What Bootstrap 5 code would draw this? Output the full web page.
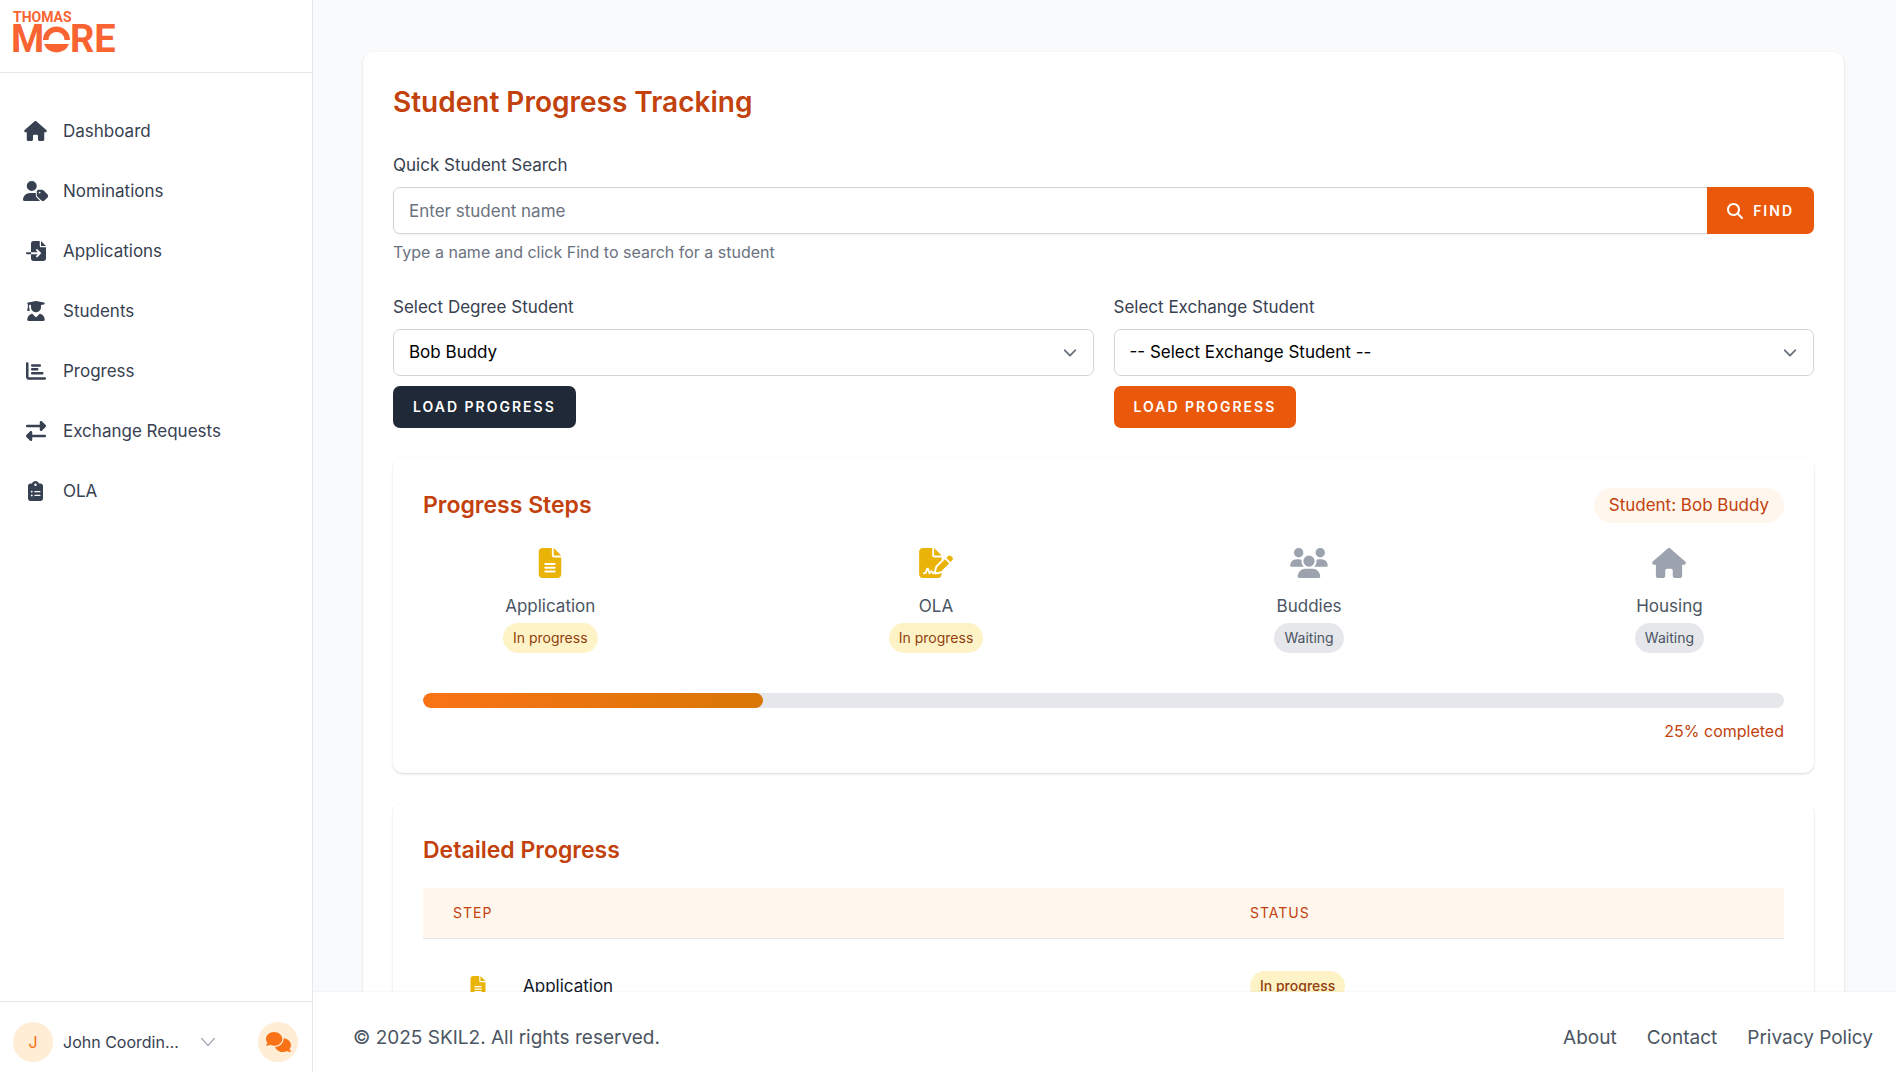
<!DOCTYPE html>
<html lang="en">
<head>
<meta charset="utf-8">
<meta name="viewport" content="width=device-width, initial-scale=1">
<title>Student Progress Tracking</title>
<link href="https://cdn.jsdelivr.net/npm/bootstrap@5.3.0/dist/css/bootstrap.min.css" rel="stylesheet">
<style>
  body { font-family: Inter, "Liberation Sans", sans-serif; font-size: 16px; line-height: 24px; color: #374151; background: #f9fafb; }
  .fa-ico { display: block; fill: currentColor; height: 20px; }
  .side-panel { width: 313px; border-right: 1px solid #e5e7eb; }
  .side-head { height: 73px; border-bottom: 1px solid #e5e7eb; }
  .side-nav { padding: 33px 20px; gap: 10px; }
  .side-nav .nav-link { color: #374151; height: 50px; padding: 0; gap: 12px; font-size: 17px; }
  .side-nav .fa-slot { width: 31px; }
  .side-foot { height: 71px; border-top: 1px solid #e5e7eb; padding: 10px 14px 0 13px; }
  .round-chip { width: 40px; height: 40px; background: #ffedd5; color: #f97316; border: 0; padding: 0; }
  .user-toggle { border: 0; background: none; padding: 0; color: #374151; gap: 10px; }
  .user-name { width: 122px; }
  .page-scroll { padding: 52px 52px 0 50px; scrollbar-width: none; }
  .panel { background: #fff; border-radius: 10px; padding: 30px; box-shadow: 0 1px 3px rgba(0,0,0,.1), 0 1px 2px rgba(0,0,0,.06); }
  .page-title { font-size: 28px; line-height: 40px; font-weight: 600; color: #c2410c; margin-bottom: 30px; }
  .panel-title { font-size: 23px; line-height: 35px; font-weight: 600; color: #c2410c; margin: 0; }
  .form-label { display: block; font-size: 17px; line-height: 26px; margin-bottom: 9px; }
  .form-control, .form-select { height: 47px; font-size: 17px; border-color: #d1d5db; border-radius: 7px; padding-left: 15px; color: #000; }
  .form-control { box-shadow: 0 1px 2px rgba(0,0,0,.05); }
  .form-control::placeholder { color: #6b7280; }
  .form-select { background-image: url("data:image/svg+xml,%3csvg xmlns='http://www.w3.org/2000/svg' fill='none' viewBox='0 0 20 20'%3e%3cpath stroke='%236b7280' stroke-linecap='round' stroke-linejoin='round' stroke-width='1.5' d='M6 8l4 4 4-4'/%3e%3c/svg%3e"); background-size: 26px 26px; background-position: right 10px center; }
  .help-line { color: #6b7280; line-height: 26px; margin-top: 5px; margin-bottom: 29px; }
  .btn-caps { font-size: 14px; line-height: 20px; font-weight: 600; letter-spacing: 2px; text-transform: uppercase; color: #fff; border: 0; border-radius: 7px; padding: 11px 20px; }
  .btn-caps .fa-ico { height: 16px; }
  .btn-ember, .btn-ember:hover { background: #ea580c; color: #fff; }
  .btn-ink, .btn-ink:hover { background: #1f2937; color: #fff; }
  .find-btn { gap: 10px; }
  .load-btn { margin-top: 10px; margin-bottom: 30px; }
  .steps-panel { margin-bottom: 30px; }
  .pill { display: inline-block; border-radius: 20px; font-size: 14px; line-height: 20px; padding: 5px 10px; }
  .pill-amber { background: #fef3c7; color: #92400e; }
  .pill-gray { background: #e5e7eb; color: #4b5563; }
  .pill-student { background: #fff7ed; color: #c2410c; font-size: 17px; line-height: 25px; padding: 5px 15px; }
  .step-row { padding: 0 80px; margin-top: 25px; margin-bottom: 40px; }
  .step-row .fa-ico { height: 30px; }
  .step-name { color: #4b5563; font-size: 17px; line-height: 25px; margin-top: 16px; margin-bottom: 4px; }
  .tone-amber { color: #eab308; }
  .tone-gray { color: #9ca3af; }
  .progress { height: 15px; border-radius: 8px; background: #e5e7eb; }
  .progress-bar { border-radius: 8px; background: linear-gradient(90deg, #f97316, #d97706); }
  .done-line { color: #c2410c; line-height: 24px; margin-top: 11px; }
  .step-table { table-layout: fixed; margin: 20px 0 0; }
  .step-table th { background: #fff7ed; color: #c2410c; font-size: 14px; line-height: 20px; font-weight: 400; letter-spacing: 1px; text-transform: uppercase; padding: 15px 30px; border-bottom: 1px solid #e5e7eb; }
  .step-table td { padding: 32px 30px; color: #111827; font-size: 17px; border-bottom: 1px solid #e5e7eb; }
  .step-table .step-cell { gap: 20px; height: 28px; }
  .step-table .fa-slot { width: 50px; }
  .step-table .pill { font-weight: 500; }
  .step-col { width: 797px; }
  .page-foot { height: 80px; padding: 12px 23px 0 40px; background: #fff; font-size: 19px; color: #4b5563; box-shadow: 0 -1px 2px rgba(0,0,0,.04); z-index: 1; }
  .page-foot a { color: #4b5563; text-decoration: none; }
  .foot-links { gap: 30px; }
</style>
</head>
<body class="vh-100 overflow-hidden d-flex">

<svg width="0" height="0" class="position-absolute" aria-hidden="true">
  <symbol id="i-house" viewBox="0 0 576 512"><path d="M575.8 255.5c0 18-15 32.1-32 32.1h-32l.7 160.2c0 2.7-.2 5.4-.5 8.1V472c0 22.1-17.9 40-40 40H456c-1.1 0-2.2 0-3.3-.1c-1.4 .1-2.8 .1-4.2 .1H416 392c-22.1 0-40-17.9-40-40V448 384c0-17.7-14.3-32-32-32H256c-17.7 0-32 14.3-32 32v64 24c0 22.1-17.9 40-40 40H160 128.1c-1.5 0-3-.1-4.5-.2c-1.2 .1-2.4 .2-3.6 .2H104c-22.1 0-40-17.9-40-40V360c0-.9 0-1.9 .1-2.8V287.6H32c-18 0-32-14-32-32.1c0-9 3-17 10-24L266.4 8c7-7 15-8 22-8s15 2 21 7L564.8 231.5c8 7 12 15 11 24z"/></symbol>
  <symbol id="i-user-tag" viewBox="0 0 640 512"><path d="M224 256A128 128 0 1 0 224 0a128 128 0 1 0 0 256zm-45.700 48C79.800 304 0 383.800 0 482.300C0 498.700 13.300 512 29.700 512H418c8 0 13-2 17-4l-78-78c-18-18-28-42-28-67V304H178.300z"/><path fill-rule="evenodd" d="M400 224h84c17 0 33 7 45 19l94 94c25 25 25 65 0 90l-68 68c-25 25-65 25-90 0l-94-94c-12-12-19-28-19-45v-84c0-26 22-48 48-48zm24 96a24 24 0 1 0 0-48 24 24 0 1 0 0 48z"/></symbol>
  <symbol id="i-file-import" viewBox="0 0 512 512"><path d="M128 64c0-35.3 28.7-64 64-64H352V128c0 17.7 14.3 32 32 32H512V448c0 35.3-28.7 64-64 64H192c-35.3 0-64-28.7-64-64V336H302.1l-39 39c-9.4 9.4-9.4 24.6 0 33.9s24.6 9.4 33.9 0l80-80c9.4-9.4 9.4-24.6 0-33.9l-80-80c-9.4-9.4-24.600-9.400-33.900 0s-9.400 24.600 0 33.900l39 39H128V64zm0 224v48H24c-13.300 0-24-10.700-24-24s10.700-24 24-24H128zM512 128H384V0L512 128z"/></symbol>
  <symbol id="i-graduate" viewBox="0 0 448 512"><path d="M219.3 .5c3.1-.6 6.3-.6 9.4 0l200 40C439.9 42.7 448 52.6 448 64s-8.1 21.3-19.3 23.500L352 102.900V160c0 70.700-57.300 128-128 128s-128-57.300-128-128V102.900L48 93.300v65.100l15.700 78.400c.9 4.700-.3 9.600-3.300 13.300s-7.600 5.900-12.400 5.900H16c-4.800 0-9.300-2.100-12.400-5.900s-4.300-8.600-3.300-13.300L16 158.400V86.600C6.500 83.300 0 74.300 0 64C0 52.600 8.100 42.700 19.300 40.500l200-40zM111.900 327.700c10.500-3.400 21.800 .4 29.400 8.500l71 75.500c6.300 6.700 17 6.700 23.300 0l71-75.500c7.600-8.100 18.900-11.900 29.400-8.500C401 348.600 448 409.400 448 481.300c0 17-13.800 30.700-30.700 30.700H30.700C13.800 512 0 498.200 0 481.300c0-71.900 47-132.700 111.900-153.600z"/></symbol>
  <symbol id="i-chart" viewBox="0 0 512 512"><path d="M32 32c17.700 0 32 14.300 32 32V400c0 8.800 7.200 16 16 16H480c17.700 0 32 14.300 32 32s-14.300 32-32 32H80c-44.200 0-80-35.800-80-80V64C0 46.300 14.300 32 32 32zm96 80c0-17.700 14.300-32 32-32l192 0c17.700 0 32 14.300 32 32s-14.300 32-32 32l-192 0c-17.700 0-32-14.300-32-32zm32 64H288c17.700 0 32 14.300 32 32s-14.300 32-32 32H160c-17.700 0-32-14.300-32-32s14.300-32 32-32zm0 104H416c17.700 0 32 14.300 32 32s-14.300 32-32 32H160c-17.700 0-32-14.300-32-32s14.300-32 32-32z"/></symbol>
  <symbol id="i-swap" viewBox="0 0 512 512"><path d="M32 96l320 0V32c0-12.900 7.800-24.600 19.800-29.600s25.700-2.200 34.900 6.900l96 96c6 6 9.400 14.100 9.400 22.600s-3.400 16.600-9.400 22.600l-96 96c-9.200 9.200-22.900 11.900-34.900 6.900s-19.800-16.600-19.800-29.600V160L32 160c-17.700 0-32-14.300-32-32s14.300-32 32-32zM480 352c17.700 0 32 14.300 32 32s-14.300 32-32 32H160v64c0 12.900-7.800 24.600-19.800 29.600s-25.700 2.200-34.900-6.900l-96-96c-6-6-9.400-14.100-9.400-22.600s3.400-16.600 9.400-22.600l96-96c9.200-9.200 22.900-11.900 34.900-6.900s19.800 16.600 19.800 29.600l0 64H480z"/></symbol>
  <symbol id="i-clipboard" viewBox="0 0 384 512"><path fill-rule="evenodd" d="M192 0c-41.800 0-77.400 26.700-90.500 64H64C28.700 64 0 92.700 0 128V448c0 35.300 28.700 64 64 64H320c35.300 0 64-28.700 64-64V128c0-35.300-28.700-64-64-64H282.500C269.400 26.700 233.800 0 192 0zm0 64a32 32 0 1 1 0 64 32 32 0 1 1 0-64zM72 272a24 24 0 1 1 48 0 24 24 0 1 1 -48 0zm104-16H304c8.800 0 16 7.200 16 16s-7.200 16-16 16H176c-8.800 0-16-7.200-16-16s7.200-16 16-16zM72 368a24 24 0 1 1 48 0 24 24 0 1 1 -48 0zm88 0c0-8.800 7.200-16 16-16H304c8.800 0 16 7.200 16 16s-7.200 16-16 16H176c-8.800 0-16-7.200-16-16z"/></symbol>
  <symbol id="i-file" viewBox="0 0 384 512"><path fill-rule="evenodd" d="M64 0C28.700 0 0 28.700 0 64V448c0 35.300 28.700 64 64 64H320c35.300 0 64-28.700 64-64V160H256c-17.700 0-32-14.300-32-32V0H64zM256 0V128H384L256 0zM112 256H272c8.800 0 16 7.200 16 16s-7.200 16-16 16H112c-8.800 0-16-7.200-16-16s7.200-16 16-16zm0 64H272c8.800 0 16 7.200 16 16s-7.200 16-16 16H112c-8.800 0-16-7.200-16-16s7.200-16 16-16zm0 64H272c8.800 0 16 7.200 16 16s-7.200 16-16 16H112c-8.800 0-16-7.200-16-16s7.200-16 16-16z"/></symbol>
  <symbol id="i-sign" viewBox="0 0 576 512"><path d="M64 0C28.700 0 0 28.700 0 64V448c0 35.300 28.700 64 64 64H320c35.300 0 64-28.700 64-64V428.700c-2.700 1.100-5.400 2-8.200 2.700l-60.100 15c-3 .7-6 1.200-9 1.400c-.9 .1-1.800 .2-2.700 .2H240c-6.100 0-11.600-3.400-14.300-8.800l-8.800-17.700c-1.700-3.400-5.100-5.500-8.800-5.500s-7.200 2.100-8.800 5.500l-8.800 17.700c-2.900 5.900-9.200 9.400-15.700 8.800s-12.100-5.100-13.900-11.300L144 381l-9.800 32.800c-6.100 20.300-24.800 34.200-46 34.200H80c-8.800 0-16-7.200-16-16s7.200-16 16-16h8.200c7.100 0 13.300-4.600 15.300-11.400l14.900-49.500c3.400-11.300 13.800-19.100 25.600-19.100s22.200 7.700 25.600 19.100l11.600 38.600c7.400-6.200 16.800-9.700 26.800-9.700c15.900 0 30.400 9 37.500 23.200l4.400 8.800h8.900c-3.100-8.800-3.700-18.400-1.400-27.800l15-60.100c2.800-11.300 8.600-21.500 16.800-29.700L384 203.600V160H256c-17.700 0-32-14.300-32-32V0H64zM256 0V128H384L256 0zM549.800 139.700c-15.600-15.600-40.900-15.600-56.600 0l-29.400 29.400 71 71 29.400-29.400c15.600-15.600 15.600-40.900 0-56.600l-14.400-14.400zM311.900 321c-4.100 4.100-7 9.200-8.400 14.900l-15 60.100c-1.400 5.500 .2 11.200 4.200 15.200s9.700 5.600 15.200 4.200l60.100-15c5.600-1.400 10.800-4.300 14.900-8.400L512.100 262.700l-71-71L311.900 321z"/></symbol>
  <symbol id="i-users" viewBox="0 0 640 512"><path d="M144 0a80 80 0 1 1 0 160A80 80 0 1 1 144 0zM512 0a80 80 0 1 1 0 160A80 80 0 1 1 512 0zM0 298.700C0 239.800 47.800 192 106.700 192h42.700c15.900 0 31 3.500 44.600 9.700c-1.300 7.200-1.900 14.700-1.900 22.300c0 38.200 16.800 72.500 43.300 96c-.2 0-.4 0-.7 0H21.300C9.600 320 0 310.400 0 298.700zM405.300 320c-.2 0-.4 0-.7 0c26.600-23.500 43.300-57.800 43.300-96c0-7.600-.7-15-1.900-22.300c13.600-6.300 28.700-9.700 44.600-9.700h42.700C592.200 192 640 239.800 640 298.700c0 11.800-9.600 21.300-21.300 21.300H405.300zM224 224a96 96 0 1 1 192 0 96 96 0 1 1 -192 0zM128 485.300C128 411.700 187.700 352 261.300 352H378.700C452.300 352 512 411.700 512 485.300c0 14.700-11.900 26.700-26.700 26.700H154.700c-14.700 0-26.700-11.900-26.700-26.700z"/></symbol>
  <symbol id="i-comments" viewBox="0 0 640 512"><path d="M208 352c114.900 0 208-78.800 208-176S322.900 0 208 0S0 78.800 0 176c0 38.600 14.700 74.300 39.600 103.400c-3.500 9.400-8.700 17.700-14.200 24.700c-4.800 6.200-9.700 11-13.300 14.300c-1.800 1.600-3.300 2.900-4.300 3.700c-.5 .4-.9 .7-1.100 .8l-.2 .2C1 327.200-1.400 334.400 .8 340.900S9.100 352 16 352c21.800 0 43.800-5.600 62.100-12.500c9.200-3.500 17.800-7.400 25.200-11.400C134.100 343.300 169.800 352 208 352zM448 176c0 112.300-99.100 196.900-216.500 207C255.800 457.400 336.400 512 432 512c38.200 0 73.900-8.700 104.700-23.900c7.500 4 16 7.900 25.200 11.400c18.300 6.900 40.300 12.500 62.100 12.500c6.900 0 13.100-4.500 15.200-11.100c2.100-6.600-.2-13.800-5.800-17.900l-.2-.2c-.2-.2-.6-.4-1.100-.8c-1-.8-2.500-2-4.300-3.700c-3.600-3.300-8.500-8.100-13.300-14.300c-5.500-7-10.700-15.400-14.200-24.700c24.900-29 39.600-64.700 39.600-103.400c0-92.800-84.900-168.900-192.600-175.500c.4 5.100 .6 10.300 .6 15.500z"/></symbol>
  <symbol id="i-search" viewBox="0 0 512 512"><path d="M416 208c0 45.900-14.900 88.300-40 122.700L502.600 457.400c12.500 12.500 12.500 32.800 0 45.300s-32.800 12.500-45.300 0L330.700 376c-34.400 25.200-76.800 40-122.700 40C93.100 416 0 322.900 0 208S93.100 0 208 0S416 93.100 416 208zM208 352a144 144 0 1 0 0-288 144 144 0 1 0 0 288z"/></symbol>
</svg>

<aside class="side-panel bg-white d-flex flex-column flex-shrink-0">
  <div class="side-head">
    <a href="#" aria-label="Thomas More home" class="d-inline-block">
      <svg width="130" height="72" viewBox="0 0 130 72" fill="#fa6432" class="d-block" font-family="Roboto, sans-serif" font-weight="700">
        <text x="13" y="22" font-size="14">THOMAS</text>
        <text x="11" y="52" font-size="38">M</text>
        <path d="M43 40a13.500 13.500 0 1 1 27 0h-5.500a8 8 0 1 0-16 0z"/>
        <path d="M44 44h25a13.500 13.500 0 0 1-25 0z"/>
        <text x="70" y="52" font-size="38">RE</text>
      </svg>
    </a>
  </div>
  <nav class="side-nav nav flex-column flex-nowrap flex-grow-1">
    <a class="nav-link d-flex align-items-center" href="#"><span class="fa-slot d-flex justify-content-center"><svg class="fa-ico" width="23"><use href="#i-house"/></svg></span>Dashboard</a>
    <a class="nav-link d-flex align-items-center" href="#"><span class="fa-slot d-flex justify-content-center"><svg class="fa-ico" width="25"><use href="#i-user-tag"/></svg></span>Nominations</a>
    <a class="nav-link d-flex align-items-center" href="#"><span class="fa-slot d-flex justify-content-center"><svg class="fa-ico" width="20"><use href="#i-file-import"/></svg></span>Applications</a>
    <a class="nav-link d-flex align-items-center" href="#"><span class="fa-slot d-flex justify-content-center"><svg class="fa-ico" width="18"><use href="#i-graduate"/></svg></span>Students</a>
    <a class="nav-link d-flex align-items-center" href="#"><span class="fa-slot d-flex justify-content-center"><svg class="fa-ico" width="20"><use href="#i-chart"/></svg></span>Progress</a>
    <a class="nav-link d-flex align-items-center" href="#"><span class="fa-slot d-flex justify-content-center"><svg class="fa-ico" width="20"><use href="#i-swap"/></svg></span>Exchange Requests</a>
    <a class="nav-link d-flex align-items-center" href="#"><span class="fa-slot d-flex justify-content-center"><svg class="fa-ico" width="15"><use href="#i-clipboard"/></svg></span>OLA</a>
  </nav>
  <div class="side-foot d-flex align-items-center justify-content-between">
    <button type="button" class="user-toggle d-flex align-items-center">
      <span class="round-chip rounded-circle d-flex align-items-center justify-content-center">J</span>
      <span class="user-name text-truncate text-start">John Coordinator</span>
      <svg class="ms-1" width="18" height="18" viewBox="0 0 20 20" fill="none" stroke="#9ca3af" stroke-width="1.500" stroke-linecap="round" stroke-linejoin="round" aria-hidden="true"><path d="M3 6l7 8 7-8"/></svg>
    </button>
    <button type="button" aria-label="Messages" class="round-chip rounded-circle d-flex align-items-center justify-content-center"><svg class="fa-ico" width="25"><use href="#i-comments"/></svg></button>
  </div>
</aside>

<div class="d-flex flex-column flex-grow-1 overflow-hidden">
  <main class="page-scroll flex-grow-1 overflow-auto">
    <div class="panel">
      <h1 class="page-title">Student Progress Tracking</h1>

      <label class="form-label" for="q">Quick Student Search</label>
      <div class="input-group">
        <input type="text" class="form-control" id="q" placeholder="Enter student name">
        <button type="button" class="btn btn-caps btn-ember find-btn d-flex align-items-center"><svg class="fa-ico" width="16"><use href="#i-search"/></svg>Find</button>
      </div>
      <p class="help-line">Type a name and click Find to search for a student</p>

      <div class="row gx-0">
        <div class="col pe-2 me-1">
          <label class="form-label" for="deg">Select Degree Student</label>
          <select class="form-select" id="deg"><option>Bob Buddy</option></select>
          <button type="button" class="btn btn-caps btn-ink load-btn">Load Progress</button>
        </div>
        <div class="col ps-2">
          <label class="form-label" for="exc">Select Exchange Student</label>
          <select class="form-select" id="exc"><option>-- Select Exchange Student --</option></select>
          <button type="button" class="btn btn-caps btn-ember load-btn">Load Progress</button>
        </div>
      </div>

      <section class="panel steps-panel">
        <div class="d-flex justify-content-between align-items-center">
          <h2 class="panel-title">Progress Steps</h2>
          <span class="pill pill-student">Student: Bob Buddy</span>
        </div>
        <div class="step-row d-flex justify-content-between">
          <div class="d-flex flex-column align-items-center"><svg class="fa-ico tone-amber" width="24"><use href="#i-file"/></svg><div class="step-name">Application</div><span class="pill pill-amber">In progress</span></div>
          <div class="d-flex flex-column align-items-center"><svg class="fa-ico tone-amber" width="34"><use href="#i-sign"/></svg><div class="step-name">OLA</div><span class="pill pill-amber">In progress</span></div>
          <div class="d-flex flex-column align-items-center"><svg class="fa-ico tone-gray" width="38"><use href="#i-users"/></svg><div class="step-name">Buddies</div><span class="pill pill-gray">Waiting</span></div>
          <div class="d-flex flex-column align-items-center"><svg class="fa-ico tone-gray" width="34"><use href="#i-house"/></svg><div class="step-name">Housing</div><span class="pill pill-gray">Waiting</span></div>
        </div>
        <div class="progress" role="progressbar" aria-label="Completed" aria-valuenow="25" aria-valuemin="0" aria-valuemax="100"><div class="progress-bar" style="width:25%"></div></div>
        <div class="done-line text-end">25% completed</div>
      </section>

      <section class="panel">
        <h2 class="panel-title">Detailed Progress</h2>
        <table class="table step-table align-middle">
          <thead><tr><th class="step-col" scope="col">Step</th><th scope="col">Status</th></tr></thead>
          <tbody>
            <tr><td><div class="step-cell d-flex align-items-center"><span class="fa-slot d-flex justify-content-center"><svg class="fa-ico tone-amber" width="16"><use href="#i-file"/></svg></span>Application</div></td><td><span class="pill pill-amber">In progress</span></td></tr>
          </tbody>
        </table>
      </section>
    </div>
  </main>
  <footer class="page-foot d-flex align-items-center justify-content-between flex-shrink-0">
    <span>© 2025 SKIL2. All rights reserved.</span>
    <nav class="d-flex foot-links"><a href="#">About</a><a href="#">Contact</a><a href="#">Privacy Policy</a></nav>
  </footer>
</div>

<script src="https://cdn.jsdelivr.net/npm/bootstrap@5.3.0/dist/js/bootstrap.bundle.min.js"></script>
</body>
</html>
